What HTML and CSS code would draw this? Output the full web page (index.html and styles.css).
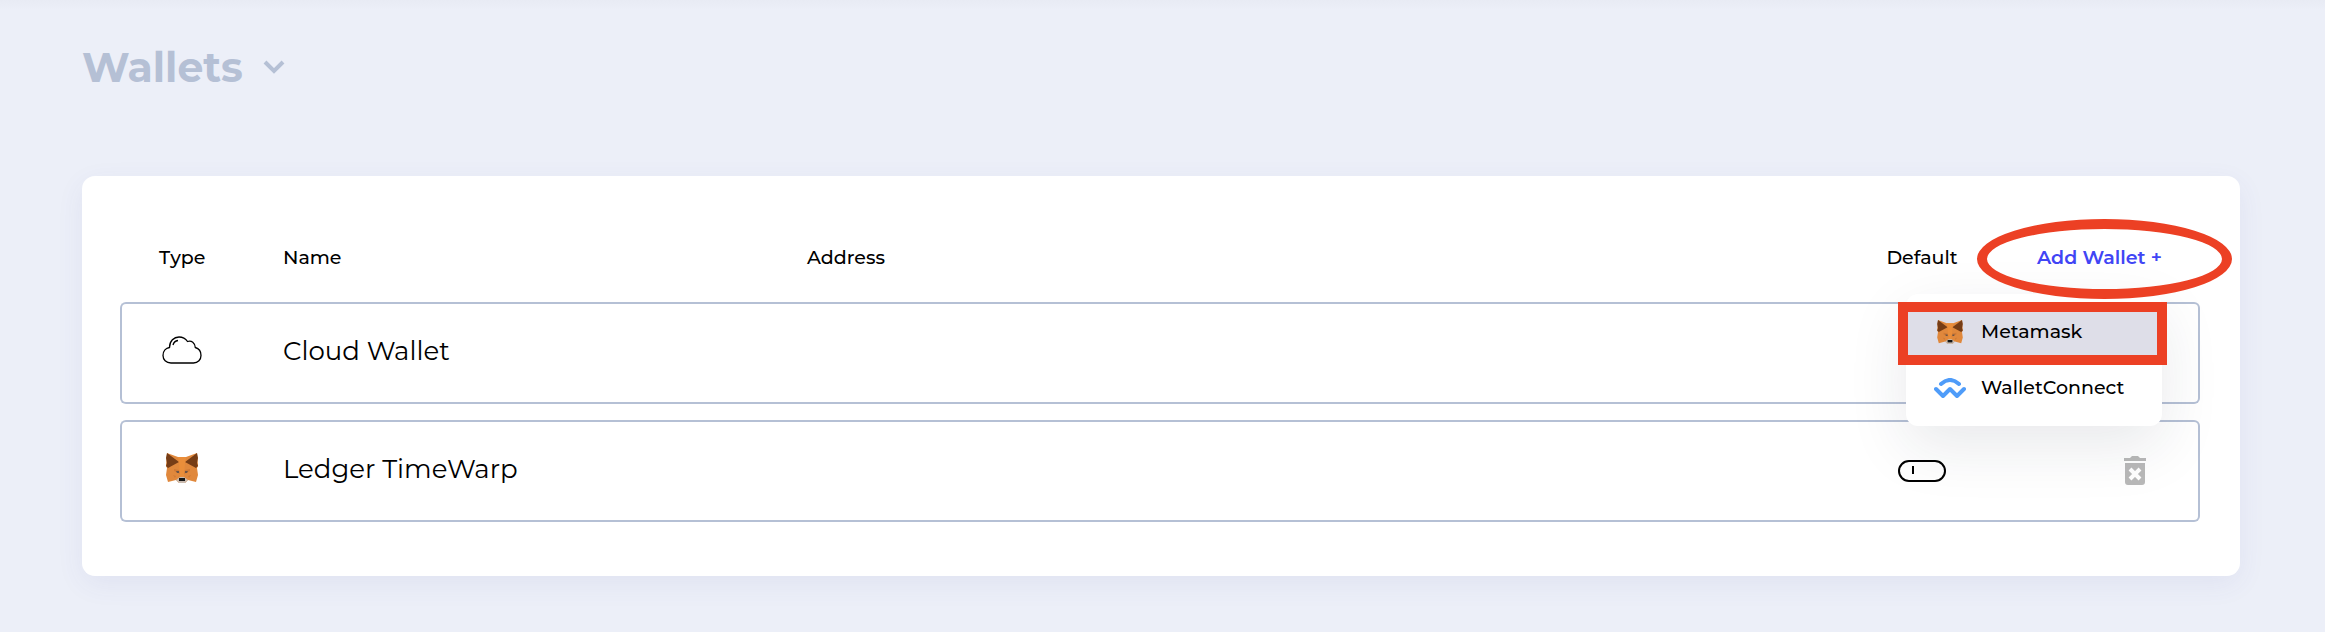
FILE: index.html
```html
<!DOCTYPE html>
<html lang="en">

<head>
    <meta charset="UTF-8">
    <meta name="viewport" content="width=device-width, initial-scale=1.0">
    <title>Wallets</title>
    <link rel="stylesheet" href="styles.css">
</head>

<body>
    <!-- fox icon, used in the table and in the menu -->
    <svg class="sprite" aria-hidden="true">
        <symbol id="fox" viewBox="0 0 32 30">
            <path fill="#e0883c" d="M1 0l11 4h8l11-4 1 13-1 2 1 7-2 7-8-2-3 3h-6l-3-3-8 2-2-7 1-7-1-2z" />
            <path fill="#763d16" d="M1 0l12 9-11 6-2-2 1-3-1-5z" />
            <path fill="#763d16" d="M31 0l-12 9 11 6 2-2-1-3 1-5z" />
            <path fill="#ea8e3a" d="M12 4h8l-1 6-1 15h-4l-1-15z" />
            <path fill="#d07a35" d="M8 16l5 1 1 4-6-3zM24 16l-5 1-1 4 6-3zM7 22l3 1-1 2zM25 22l-3 1 1 2z" />
            <path fill="#6d5446" d="M10 18h3v2h-2zM22 18h-3v2h2z" />
            <path fill="#c9bbb0" d="M10 27l4-3h4l4 3-3 3h-6z" />
            <path fill="#161616" d="M13 25h6v3h-6z" />
        </symbol>
    </svg>

    <div class="page">
        <h1 class="title">
            <button class="title_btn" type="button">Wallets
                <svg class="chevron" viewBox="0 0 22 14" aria-hidden="true">
                    <path d="M2 2l9 9 9-9" />
                </svg>
            </button>
        </h1>

        <div class="card">
            <table class="wallets">
                <colgroup>
                    <col class="col_type">
                    <col class="col_name">
                    <col class="col_address">
                    <col class="col_default">
                    <col class="col_action">
                </colgroup>
                <thead>
                    <tr>
                        <th>Type</th>
                        <th>Name</th>
                        <th>Address</th>
                        <th class="center">Default</th>
                        <th class="right">
                            <div class="add">
                                <button class="add_btn" type="button">Add Wallet +</button>
                                <div class="menu">
                                    <button class="menu_item active" type="button">
                                        <svg class="menu_icon fox_small" aria-hidden="true"><use href="#fox" /></svg>
                                        Metamask
                                    </button>
                                    <button class="menu_item" type="button">
                                        <svg class="menu_icon connect" viewBox="0 0 32 20" aria-hidden="true">
                                            <path d="M7 6q9-8 18 0M2 11l7 7 7-7 7 7 7-7" />
                                        </svg>
                                        WalletConnect
                                    </button>
                                </div>
                            </div>
                        </th>
                    </tr>
                </thead>
                <tbody>
                    <tr>
                        <td>
                            <svg class="cloud" viewBox="0 0 40 28" aria-hidden="true">
                                <path d="M9 27C4 27 1 23.500 1 19.500 1 15 4 12 7.500 11.500 7.500 5 12 1 17 1c3.500 0 6.500 1.500 8.500 4.500 4-1.500 7.500 1.500 7.800 6C37 12.500 39 15.500 39 19.500c0 4-3 7.500-7.500 7.500z" />
                                <path d="M11 9q1-4 5-4.500" />
                            </svg>
                        </td>
                        <td class="name">Cloud Wallet</td>
                        <td></td>
                        <td></td>
                        <td></td>
                    </tr>
                    <tr>
                        <td><svg class="fox" aria-hidden="true"><use href="#fox" /></svg></td>
                        <td class="name">Ledger TimeWarp</td>
                        <td></td>
                        <td class="center"><input class="toggle" type="checkbox" aria-label="Default wallet"></td>
                        <td class="right">
                            <button class="delete" type="button" aria-label="Delete wallet">
                                <svg viewBox="0 0 22 30" aria-hidden="true">
                                    <path fill="#b9b9b9" d="M0 2h6l2-2h6l2 2h6v3H0zM1 7h20v19q0 3-3 3H4q-3 0-3-3z" />
                                    <path stroke="#fff" stroke-width="4" d="M6 13l10 10M16 13L6 23" />
                                </svg>
                            </button>
                        </td>
                    </tr>
                </tbody>
            </table>
        </div>
    </div>
</body>

</html>
```
FILE: styles.css
```css
* {
    box-sizing: border-box;
}

body {
    margin: 0;
    min-height: 100vh;
    background: linear-gradient(#e8ebf4, #eceff8 10px);
    color: #000;
    font-family: Montserrat, Inter, sans-serif;
}

button {
    margin: 0;
    padding: 0;
    border: none;
    background: none;
    font: inherit;
    color: inherit;
    cursor: pointer;
}

svg {
    display: block;
    fill: none;
}

.sprite {
    position: absolute;
    width: 0;
    height: 0;
}

.page {
    padding: 41px 85px 56px 82px;
}

.title {
    margin: 0 0 83px;
    font-size: 41px;
    line-height: 52px;
    font-weight: 700;
    color: #b5c0d5;
}

.title_btn {
    display: flex;
    align-items: center;
    gap: 20px;
}

.chevron {
    width: 22px;
    height: 14px;
    stroke: #b5c0d5;
    stroke-width: 4;
}

.card {
    padding: 38px 40px 38px 38px;
    background-color: #fff;
    border-radius: 13px;
    box-shadow: 0 8px 28px rgba(70, 70, 160, 0.07);
}

.wallets {
    width: 100%;
    table-layout: fixed;
    border-collapse: separate;
    border-spacing: 0 16px;
}

.col_type {
    width: 163px;
}

.col_name {
    width: 524px;
}

.col_default {
    width: 152px;
}

.col_action {
    width: 202px;
}

.wallets th {
    height: 56px;
    padding: 0;
    font-size: 19px;
    line-height: 24px;
    font-weight: 500;
    text-align: left;
}

.wallets td {
    height: 102px;
    padding: 0 0 6px;
    border: 2px solid #b5c0d5;
    border-width: 2px 0;
}

.wallets th:first-child {
    padding-left: 39px;
}

.wallets td:first-child {
    padding-left: 40px;
    border-left-width: 2px;
    border-radius: 6px 0 0 6px;
}

.wallets td:last-child {
    border-right-width: 2px;
    border-radius: 0 6px 6px 0;
}

.wallets .name {
    padding-bottom: 4px;
    font-size: 26px;
    line-height: 32px;
}

.wallets .center {
    text-align: center;
}

.wallets td.center {
    padding: 0;
}

.wallets th.right {
    padding-right: 38px;
}

.wallets td.right {
    padding: 0 52px 0 0;
}

.cloud {
    width: 40px;
    height: 28px;
    stroke: #000;
    stroke-width: 1.300;
}

.fox {
    width: 32px;
    height: 30px;
    margin-left: 4px;
}

.add {
    position: relative;
    text-align: right;
}

.add_btn {
    position: relative;
    font-weight: 600;
    color: #4145f5;
}

/* red ring round the add button */
.add_btn::after {
    content: "";
    position: absolute;
    inset: -27px -70px -29px -60px;
    border: 10px solid #ec4024;
    border-radius: 50%;
    z-index: 2;
}

.menu {
    position: absolute;
    top: 48px;
    right: 0;
    width: 256px;
    padding: 10px 0;
    background-color: #fff;
    border-radius: 12px;
    box-shadow: 0 20px 60px rgba(30, 35, 60, 0.1);
}

.menu_item {
    position: relative;
    display: flex;
    align-items: center;
    gap: 15px;
    width: 100%;
    height: 56px;
    padding: 0 28px;
}

.menu_item.active {
    background-color: #dedee8;
}

/* red frame round the chosen item */
.menu_item.active::after {
    content: "";
    position: absolute;
    inset: -2px -5px -5px -8px;
    border: 10px solid #ec4024;
}

.menu_icon {
    width: 32px;
    height: 20px;
}

.fox_small {
    height: 24px;
}

.connect {
    stroke: #4f9cf9;
    stroke-width: 4;
    stroke-linejoin: round;
    stroke-linecap: round;
}

.toggle {
    appearance: none;
    display: block;
    width: 48px;
    height: 22px;
    margin: 0 auto;
    padding: 4px 12px;
    border: 2px solid #000;
    border-radius: 11px;
}

.toggle::before {
    content: "";
    display: block;
    width: 2px;
    height: 8px;
    background-color: #000;
}

.delete {
    display: block;
    margin-left: auto;
}

.delete svg {
    width: 22px;
    height: 30px;
}
```
